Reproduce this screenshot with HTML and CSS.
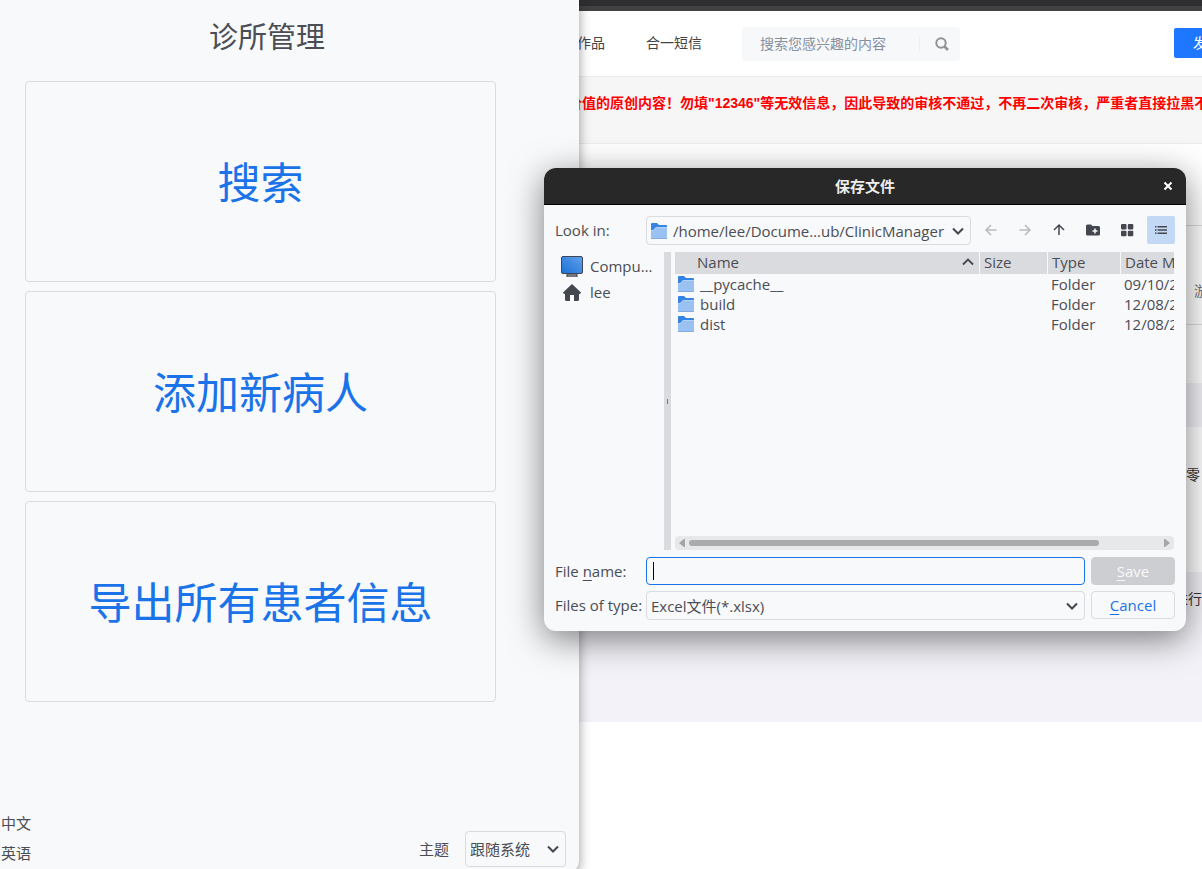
FILE: index.html
```html
<!DOCTYPE html>
<html lang="zh-CN">
<head>
<meta charset="utf-8">
<title>诊所管理</title>
<link rel="stylesheet" href="styles.css">
</head>
<body>
<svg class="defs" aria-hidden="true">
  <symbol id="folder" viewBox="0 0 16 16">
    <path d="M0 1Q0 0 1 0H6L8 2H15Q16 2 16 3V12H0Z" fill="#3584e4"/>
    <path d="M0 7L2 7L5 4H16V16H0Z" fill="#99c1f1"/>
    <path d="M0 7.500H2.500L5.500 4.500H16" fill="none" stroke="#b5d3f6"/>
    <path d="M0 15.500H16" stroke="#85ace0"/>
  </symbol>
  <symbol id="chevron" viewBox="0 0 12 8">
    <path d="M1 1.500L6 6.500L11 1.500" fill="none" stroke="#44474f" stroke-width="2"/>
  </symbol>
</svg>
<div class="desktop">
  <section class="browser">
    <div class="browser-chrome"></div>
    <header class="site-header">
      <nav class="site-nav"><a href="#">作品</a><a href="#">合一短信</a></nav>
      <form class="site-search">
        <input type="text" placeholder="搜索您感兴趣的内容" aria-label="搜索">
        <button type="button" aria-label="搜索"><svg width="14" height="14" viewBox="0 0 14 14"><circle cx="6" cy="6" r="4.700" fill="none" stroke="#8f9296" stroke-width="2"/><path d="M9.500 9.500L13 13" stroke="#8f9296" stroke-width="2.500"/></svg></button>
      </form>
      <button class="publish" type="button">发布</button>
    </header>
    <p class="notice">价值的原创内容！勿填"12346"等无效信息，因此导致的审核不通过，不再二次审核，严重者直接拉黑不</p>
    <div class="row blank"></div>
    <div class="row category"><span>游</span></div>
    <div class="row spacer"></div>
    <div class="row band"></div>
    <div class="row detail"><span>零</span></div>
    <div class="row footer-band"><span>进行</span></div>
  </section>

  <main class="app">
    <h1>诊所管理</h1>
    <div class="actions">
      <button type="button">搜索</button>
      <button type="button">添加新病人</button>
      <button type="button">导出所有患者信息</button>
    </div>
    <footer class="app-footer">
      <div class="languages"><span>中文</span><span>英语</span></div>
      <div class="theme">
        <label for="theme">主题</label>
        <div class="combo theme-combo">
          <select id="theme"><option>跟随系统</option></select>
          <svg class="chevron" width="12" height="8"><use href="#chevron"/></svg>
        </div>
      </div>
    </footer>
  </main>

  <section class="dialog" role="dialog" aria-labelledby="dialog-title">
    <header class="titlebar">
      <h2 id="dialog-title">保存文件</h2>
      <button type="button" aria-label="Close"><svg width="10" height="10" viewBox="0 0 10 10"><path d="M1.500 1.500L8.500 8.500M8.500 1.500L1.500 8.500" stroke="#fff" stroke-width="2"/></svg></button>
    </header>
    <div class="dialog-body">
      <div class="line">
        <label class="field-label" for="lookin">Look in:</label>
        <div class="combo path-combo">
          <svg width="16" height="16"><use href="#folder"/></svg>
          <select id="lookin"><option>/home/lee/Docume…ub/ClinicManager</option></select>
          <svg class="chevron" width="12" height="8"><use href="#chevron"/></svg>
        </div>
        <div class="tools">
          <button type="button" disabled aria-label="Back"><svg width="16" height="16" viewBox="0 0 16 16"><path d="M13.500 8H3.500M8 3L3 8L8 13" fill="none" stroke="#b9bbbf" stroke-width="1.500"/></svg></button>
          <button type="button" disabled aria-label="Forward"><svg width="16" height="16" viewBox="0 0 16 16"><path d="M2.500 8H12.500M8 3L13 8L8 13" fill="none" stroke="#b9bbbf" stroke-width="1.500"/></svg></button>
          <button type="button" aria-label="Parent directory"><svg width="16" height="16" viewBox="0 0 16 16"><path d="M8 13V3.500M3 8L8 3L13 8" fill="none" stroke="#44474f" stroke-width="1.500"/></svg></button>
          <button type="button" aria-label="Create new folder"><svg width="16" height="16" viewBox="0 0 16 16"><path d="M1 4Q1 2.500 2.500 2.500H6L7.500 4H13.500Q15 4 15 5.500V12Q15 13.500 13.500 13.500H2.500Q1 13.500 1 12Z" fill="#44474f"/><path d="M10 6.500V11.500M7.500 9H12.500" stroke="#f8f9fb" stroke-width="1.500"/></svg></button>
          <button type="button" aria-label="List view"><svg width="16" height="16" viewBox="0 0 16 16" fill="#44474f"><rect x="2" y="2" width="5.500" height="5.500" rx="1"/><rect x="8.800" y="2" width="5.500" height="5.500" rx="1"/><rect x="2" y="8.800" width="5.500" height="5.500" rx="1"/><rect x="8.800" y="8.800" width="5.500" height="5.500" rx="1"/></svg></button>
          <button type="button" class="active" aria-label="Detail view"><svg width="16" height="16" viewBox="0 0 16 16" stroke="#44474f" stroke-width="1.600"><path d="M2 4.800H3.500M2 8H3.500M2 11.200H3.500M4.500 4.800H14M4.500 8H14M4.500 11.200H14"/></svg></button>
        </div>
      </div>

      <div class="panes">
        <ul class="places">
          <li><svg width="22" height="22" viewBox="0 0 22 22"><defs><linearGradient id="screen" x1="0" y1="1" x2="1" y2="0"><stop offset="0" stop-color="#1c71d8"/><stop offset="1" stop-color="#62a0ea"/></linearGradient></defs><rect x="6" y="17" width="10" height="4" fill="#77767b"/><path d="M6 21V17M16 21V17" stroke="#444" /><rect x=".5" y=".5" width="21" height="17" rx="1.500" fill="url(#screen)" stroke="#3d4658"/></svg><span>Compu…</span></li>
          <li><svg width="22" height="22" viewBox="0 0 22 22"><path d="M11 2L2 10.500L3 12H4V17.500Q4 19 5.500 19H9V13H13V19H16.500Q18 19 18 17.500V12H19L20 10.500Z" fill="#44474f"/></svg><span>lee</span></li>
        </ul>
        <div class="splitter"><i></i></div>
        <div class="files">
          <div class="table-clip">
            <table>
              <colgroup><col class="c-name"><col class="c-size"><col class="c-type"><col class="c-date"></colgroup>
              <thead><tr><th><div class="sorted">Name<svg width="12" height="8" viewBox="0 0 12 8"><path d="M1 6.500L6 1.500L11 6.500" fill="none" stroke="#44474f" stroke-width="1.800"/></svg></div></th><th>Size</th><th>Type</th><th>Date Modified</th></tr></thead>
              <tbody>
                <tr><td><div class="file"><svg width="16" height="16"><use href="#folder"/></svg>__pycache__</div></td><td></td><td>Folder</td><td>09/10/2</td></tr>
                <tr><td><div class="file"><svg width="16" height="16"><use href="#folder"/></svg>build</div></td><td></td><td>Folder</td><td>12/08/2</td></tr>
                <tr><td><div class="file"><svg width="16" height="16"><use href="#folder"/></svg>dist</div></td><td></td><td>Folder</td><td>12/08/2</td></tr>
              </tbody>
            </table>
          </div>
          <div class="scrollbar">
            <svg width="6" height="8" viewBox="0 0 6 8"><path d="M6 0V8H5L0 4L5 0Z" fill="#a3a5a6"/></svg>
            <div class="track"><div class="thumb"></div></div>
            <svg width="6" height="8" viewBox="0 0 6 8"><path d="M0 0V8H1L6 4L1 0Z" fill="#a3a5a6"/></svg>
          </div>
        </div>
      </div>

      <div class="line">
        <label class="field-label" for="filename">File <u>n</u>ame:</label>
        <div class="name-box"><input id="filename" type="text"><i class="caret"></i></div>
        <button class="push save" type="button" disabled><span><u>S</u>ave</span></button>
      </div>
      <div class="line">
        <label class="field-label" for="filetype">Files of type:</label>
        <div class="combo type-combo">
          <select id="filetype"><option>Excel文件(*.xlsx)</option></select>
          <svg class="chevron" width="12" height="8"><use href="#chevron"/></svg>
        </div>
        <button class="push cancel" type="button"><span><u>C</u>ancel</span></button>
      </div>
    </div>
  </section>
</div>
</body>
</html>
```
FILE: styles.css
```css
* { box-sizing: border-box; }
body {
  margin: 0;
  background: #fff;
  color: #4b4d54;
  font: 15px/20px "Open Sans", "Noto Sans CJK SC", sans-serif;
}
button, input, select {
  font: inherit;
  color: inherit;
  margin: 0;
  padding: 0;
  border: 0;
  background: none;
  outline: 0;
}
h1, h2, p, ul { margin: 0; padding: 0; }
svg { display: block; flex: none; }
.defs { position: absolute; width: 0; height: 0; }
.desktop { position: relative; height: 100vh; overflow: hidden; }

/* Browser window in the background */
.browser {
  min-height: 100%;
  font: 14px/20px "Liberation Sans", "Noto Sans CJK SC", sans-serif;
  color: #333;
  white-space: nowrap;
}
.browser-chrome { height: 11px; background: #2e2e30; border-bottom: 5px solid #414142; }
.site-header { display: flex; align-items: center; height: 66px; padding-left: 577px; border-bottom: 1px solid #ececec; }
.site-nav { display: flex; gap: 41px; margin-right: 40px; padding-bottom: 2px; }
.site-nav a { color: #444; text-decoration: none; }
.site-search { display: flex; align-items: center; flex: none; width: 218px; height: 34px; padding: 0 10px 0 18px; border-radius: 4px; background: #f7f8fa; }
.site-search input { flex: 1; min-width: 0; }
.site-search input::placeholder { color: #8590a0; opacity: 1; }
.site-search button { padding-left: 15px; padding-right: 1px; border-left: 1px solid #eceef1; }
.publish { flex: none; width: 84px; height: 30px; margin: 0 0 2px 214px; border-radius: 2px; background: #1e78ff; color: #fff; text-align: left; padding-left: 19px; }
.notice { height: 67px; padding: 16px 0 0 568px; background: #f6f6f6; border-bottom: 1px solid #ececec; color: #f00; font-weight: 700; }
.row { display: flex; justify-content: flex-end; align-items: center; }
.row span { flex: none; }
.blank { height: 82px; border-bottom: 1px solid #ddd; }
.category { height: 99px; padding-top: 32px; border-bottom: 1px solid #ddd; color: #777; }
.category span { width: 8px; }
.spacer { height: 58px; }
.band { height: 44px; background: #f3f2f8; }
.detail { height: 145px; padding-bottom: 50px; }
.detail span { width: 16px; }
.footer-band { height: 150px; padding-bottom: 96px; background: #f3f2f8; }

/* Clinic manager window */
.app {
  position: absolute;
  top: 0;
  left: 0;
  bottom: -4px;
  width: 579px;
  display: flex;
  flex-direction: column;
  background: #f8f9fb;
  border-radius: 0 0 12px 0;
  box-shadow: 0 3px 12px rgba(0, 0, 0, .4);
}
.app h1 { width: 534px; padding: 17px 0 24px; font-size: 29px; line-height: 40px; font-weight: 400; text-align: center; }
.actions { display: flex; flex-direction: column; gap: 9px; padding: 0 83px 0 25px; }
.actions button { height: 201px; padding-top: 2px; border: 1px solid #d9dbde; border-radius: 4px; color: #1a73e8; font-size: 43px; }
.app-footer { display: flex; justify-content: space-between; align-items: flex-end; margin-top: auto; padding: 0 13px 6px 1px; }
.languages { display: flex; flex-direction: column; gap: 10px; padding-bottom: 4px; }
.theme { display: flex; align-items: center; gap: 16px; }

.combo { position: relative; display: flex; align-items: center; height: 29px; border: 1px solid #d9dbde; border-radius: 4px; padding-left: 4px; }
.combo select { flex: 1; min-width: 0; height: 100%; appearance: none; }
.chevron { position: absolute; right: 6px; pointer-events: none; }
.theme-combo { width: 101px; height: 36px; }

/* Save dialog */
.dialog {
  position: absolute;
  left: 544px;
  top: 168px;
  width: 642px;
  border-radius: 12px;
  background: #f8f9fb;
  box-shadow: 0 8px 34px rgba(0, 0, 0, .5);
}
.titlebar { position: relative; display: flex; align-items: center; justify-content: center; height: 37px; border-radius: 12px 12px 0 0; background: #282828; border-bottom: 1px solid #000; color: #eeeeec; }
.titlebar h2 { font-size: 15px; line-height: 20px; }
.titlebar button { position: absolute; right: 13px; }
.dialog-body { display: flex; flex-direction: column; gap: 7px; padding: 11px; }
.line { display: flex; align-items: flex-start; }
.line + .line { margin-top: -1px; }
.field-label { width: 91px; flex: none; padding-top: 4px; white-space: nowrap; }
.path-combo { flex: 1; gap: 6px; }
.path-combo select { overflow: hidden; }
.type-combo { flex: 1; }
u { text-underline-offset: 3px; text-decoration-thickness: 1px; }
.tools { display: flex; gap: 6px; margin-left: 6px; }
.tools button { display: grid; place-items: center; width: 28px; height: 28px; border-radius: 2px; }
.tools .active { background: #c2d8f5; }

.panes { display: flex; height: 298px; }
.places { width: 109px; padding: 2px 0 0 6px; list-style: none; }
.places li { display: flex; align-items: center; gap: 7px; height: 26px; }
.places span { padding-bottom: 2px; }
.splitter { display: grid; place-items: center; width: 7px; margin-right: 4px; background: #d9dbde; }
.splitter i { width: 1px; height: 5px; background: #77797d; }
.files { flex: 1; min-width: 0; margin-right: 1px; display: flex; flex-direction: column; }
.table-clip { flex: 1; overflow: hidden; }
table { width: 607px; table-layout: fixed; border-collapse: separate; border-spacing: 0; }
.c-name { width: 305px; }
.c-size { width: 68px; }
.c-type { width: 73px; }
th { height: 22px; padding: 0 4px 2px; background: #dadbde; border-right: 1px solid #f8f9fb; font-weight: 400; line-height: 20px; text-align: left; }
th:first-child { padding-left: 22px; padding-right: 5px; }
.sorted { display: flex; align-items: center; justify-content: space-between; }
td { height: 20px; padding: 0 3px; line-height: 20px; }
.file { display: flex; align-items: center; gap: 6px; }
.scrollbar { display: flex; align-items: center; gap: 4px; height: 14px; padding: 0 4px; border-radius: 4px; background: #e7e8e9; }
.track { flex: 1; }
.thumb { width: 87%; height: 6px; border-radius: 3px; background: #a9acab; }

.name-box { position: relative; flex: 1; height: 28px; }
.name-box input { width: 100%; height: 100%; padding: 0 6px; border: 1px solid #1a73e8; border-radius: 4px; }
.caret { position: absolute; left: 7px; top: 5px; width: 1px; height: 18px; background: #000; }
.push { width: 84px; height: 28px; margin-left: 6px; border: 1px solid #d9dbde; border-radius: 4px; }
.save { background: #cdced1; border-color: #cdced1; color: #f8f9fb; }
.cancel { color: #1a73e8; }
```
